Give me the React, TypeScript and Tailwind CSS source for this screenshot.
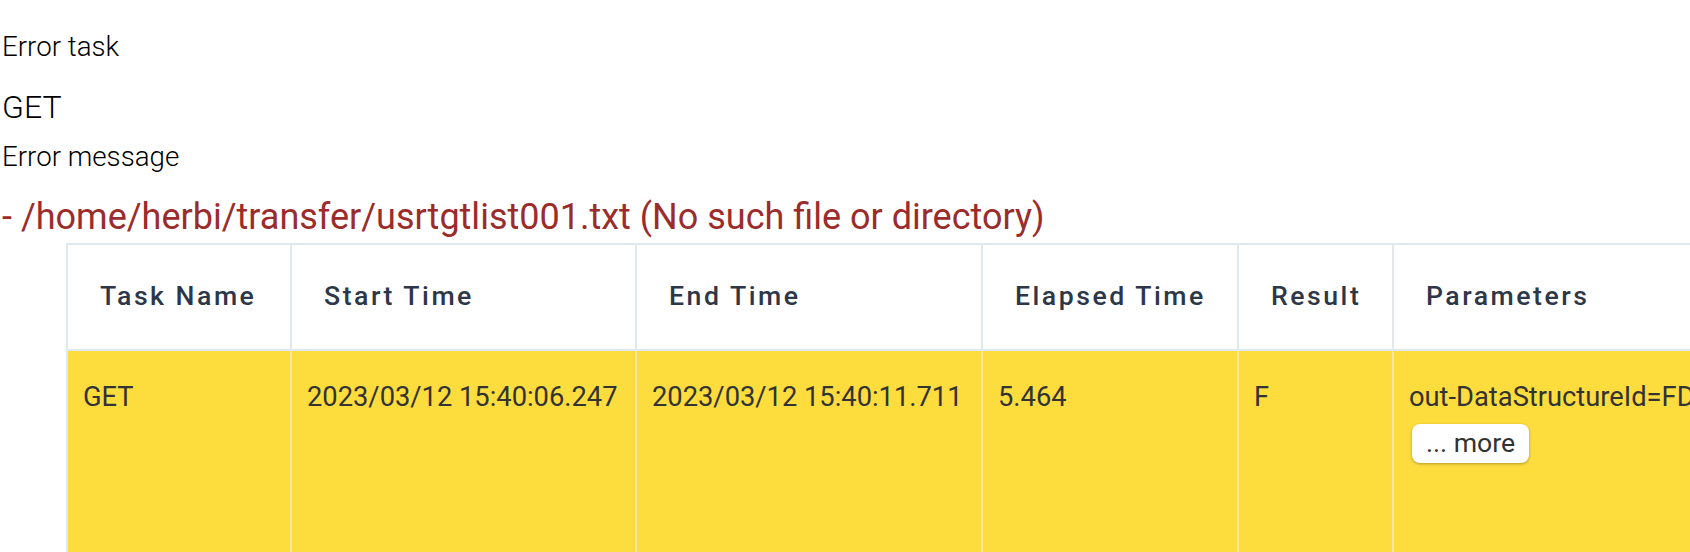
const columns = [
  { label: 'Task Name', width: 'w-[224px]' },
  { label: 'Start Time', width: 'w-[345px]' },
  { label: 'End Time', width: 'w-[346px]' },
  { label: 'Elapsed Time', width: 'w-[256px]' },
  { label: 'Result', width: 'w-[155px]' },
]

const row = ['GET', '2023/03/12 15:40:06.247', '2023/03/12 15:40:11.711', '5.464', 'F']

export default function App() {
  return (
    <div className="w-[1690px] h-[552px] overflow-hidden bg-white font-['Roboto','Liberation_Sans',sans-serif] text-black">
      <div className="pl-[2px] pt-[27px]">
        <div className="text-[27.7px] font-light leading-[40px]">Error task</div>
        <div className="mt-[20px] text-[32px] font-light leading-[40px]">GET</div>
        <div className="mt-[10px] text-[27.7px] font-light leading-[40px]">Error message</div>
        <div className="mt-[20px] text-[36px] leading-[40px] text-[#9b2c2c] whitespace-nowrap">
          - /home/herbi/transfer/usrtgtlist001.txt (No such file or directory)
        </div>
      </div>

      <div className="mt-[6px] ml-[66px] w-max border-2 border-[#e2e8f0]">
        {/* header */}
        <div className="flex bg-white border-b-2 border-[#e2e8f0]">
          {columns.map((c) => (
            <div
              key={c.label}
              className={`${c.width} shrink-0 h-[104px] flex items-center pl-[32px] pb-[3px] border-r-2 border-[#e2e8f0] text-[26.67px] font-medium tracking-[2.5px] text-[#2d3748] whitespace-nowrap`}
            >
              {c.label}
            </div>
          ))}
          <div className="w-[700px] shrink-0 h-[104px] flex items-center pl-[32px] pb-[3px] text-[26.67px] font-medium tracking-[2.5px] text-[#2d3748]">
            Parameters
          </div>
        </div>

        {/* body */}
        <div className="flex bg-[#fddc3e] text-[#333333] text-[27.3px] leading-[36px]">
          {row.map((v, i) => (
            <div
              key={i}
              className={`${columns[i].width} shrink-0 h-[240px] pt-[28px] pl-[15px] border-r-2 border-[#f6e7a2] whitespace-nowrap`}
            >
              {v}
            </div>
          ))}
          <div className="w-[700px] shrink-0 h-[240px] pt-[28px] pl-[15px] whitespace-nowrap">
            <div>out-DataStructureId=FDS_USRTGTLIST001</div>
            <button className="mt-[9px] ml-[3px] bg-white rounded-[8px] px-[14px] pt-[3px] pb-[4px] leading-[32px] text-[26.67px] text-[#333333] shadow-[0_1px_3px_rgba(0,0,0,0.3)]">
              ... more
            </button>
          </div>
        </div>
      </div>
    </div>
  )
}
